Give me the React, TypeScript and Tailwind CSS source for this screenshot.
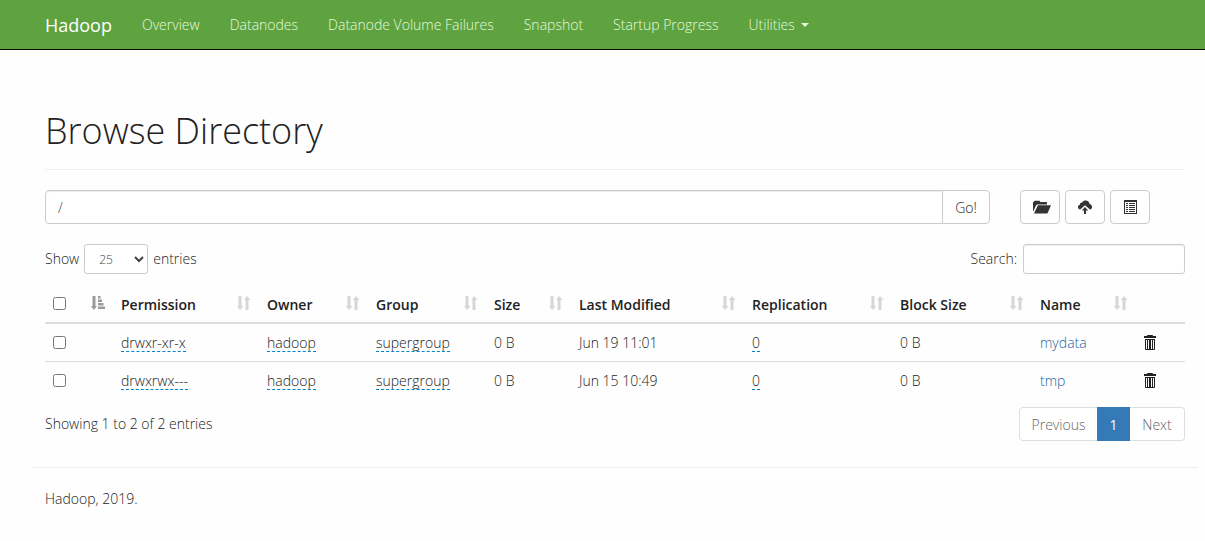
import { useState } from 'react';

interface FileEntry {
  permission: string;
  owner: string;
  group: string;
  size: string;
  modified: string;
  replication: string;
  blockSize: string;
  name: string;
}

const NAV_LINKS = ['Overview', 'Datanodes', 'Datanode Volume Failures', 'Snapshot', 'Startup Progress'];

const COLUMNS = [
  { label: 'Permission', width: 'w-[146px]' },
  { label: 'Owner', width: 'w-[109px]' },
  { label: 'Group', width: 'w-[118px]' },
  { label: 'Size', width: 'w-[85px]' },
  { label: 'Last Modified', width: 'w-[173px]' },
  { label: 'Replication', width: 'w-[148px]' },
  { label: 'Block Size', width: 'w-[140px]' },
  { label: 'Name', width: 'w-[104px]' },
];

const FILES: FileEntry[] = [
  { permission: 'drwxr-xr-x', owner: 'hadoop', group: 'supergroup', size: '0 B', modified: 'Jun 19 11:01', replication: '0', blockSize: '0 B', name: 'mydata' },
  { permission: 'drwxrwx---', owner: 'hadoop', group: 'supergroup', size: '0 B', modified: 'Jun 15 10:49', replication: '0', blockSize: '0 B', name: 'tmp' },
];

function FolderOpenIcon() {
  return (
    <svg className="w-[18px] h-[14px] ml-[3px]" viewBox="0 0 18 14" fill="currentColor" aria-hidden="true">
      <path d="M0 11V2h.8L1.5.8h5L7.3 2H13c.6 0 1 .4 1 1v1.500H4.700c-.8 0-1.400.4-1.700 1.100L.5 11z" />
      <path d="M4.900 5.300H18L14.800 12.800c-.2.500-.5.800-1 .8H1z" />
    </svg>
  );
}

function CloudUploadIcon() {
  return (
    <svg className="w-[14px] h-[14px]" viewBox="0 0 14 14" fill="currentColor" aria-hidden="true">
      <path d="M2.2 9.500C.9 9.200 0 8.500 0 7.200c0-1.200.8-2.100 1.900-2.400C1.900 3.300 3 2.400 4.200 2.600 4.900 1.100 6.100.6 7.600.6c2.200 0 3.800 1.300 3.900 3.400C13 4.300 14 5.400 14 6.900c0 1.300-.8 2.300-2 2.600L7 5.300z" />
      <path d="M7 7l3.200 3.400H8V14H6v-3.600H3.800z" />
    </svg>
  );
}

function ListIcon() {
  return (
    <svg className="w-[14px] h-[14px]" viewBox="0 0 14 14" fill="currentColor" aria-hidden="true">
      <path fillRule="evenodd" d="M1 0h13v14H1zM2 2v11h11V2z" />
      <path d="M3 3h2v1H3zM6 3h6v1H6zM3 5h2v1H3zM6 5h6v1H6zM3 7h2v1H3zM6 7h6v1H6zM3 9h2v1H3zM6 9h6v1H6zM3 11h2v1H3zM6 11h6v1H6z" />
    </svg>
  );
}

function TrashIcon() {
  return (
    <svg className="w-[14px] h-[16px]" viewBox="0 0 14 16" fill="currentColor" aria-hidden="true">
      <path fillRule="evenodd" d="M3 1c0-.6.4-1 1-1h4c.6 0 1 .4 1 1h3v2H0V1zM4 1h4z" />
      <path fillRule="evenodd" d="M1 4h10v10c0 .6-.4 1-1 1H2c-.6 0-1-.4-1-1zM2 5v9h1V5zM4 5v9h1V5zM7 5v9h1V5zM9 5v9h1V5z" />
    </svg>
  );
}

function SortIcon() {
  return (
    <svg className="w-[14px] h-[15px] text-[#d6d6d6]" viewBox="0 0 14 15" fill="currentColor" aria-hidden="true">
      <path d="M1.500 1h3v10h2L3 15l-3-4h1.500z" />
      <path d="M8.500 15h3V5h2L10 1 7 5h1.500z" />
    </svg>
  );
}

function SortAscIcon() {
  return (
    <svg className="w-[14px] h-[15px] text-[#999]" viewBox="0 0 14 15" fill="currentColor" aria-hidden="true">
      <path d="M1.500 1h3v10h1.500L3 15l-3-4h1.500z" />
      <path d="M7 1h2.500v2.500H7zM7 4.500h4V7H7zM7 8h5.500v2.500H7zM7 11.500h7V14H7z" />
    </svg>
  );
}

function Editable({ text }: { text: string }) {
  return (
    <a href="#" className="inline-block h-[18px] leading-[17px] border-b border-dashed border-b-sky-600">{text}</a>
  );
}

export default function App() {
  const [path, setPath] = useState('/');
  const [search, setSearch] = useState('');
  const [pageSize, setPageSize] = useState('25');
  const [selected, setSelected] = useState<string[]>([]);

  const rows = FILES.filter(f => f.name.includes(search));
  const allSelected = selected.length === FILES.length;

  const toggle = (name: string) =>
    setSelected(s => (s.includes(name) ? s.filter(n => n !== name) : [...s, name]));

  return (
    <div className="min-h-screen bg-[#fefefe] text-[#222] text-sm leading-5 font-light font-['Open_Sans',sans-serif]">
      <nav className="flex items-center h-[50px] pt-px pl-[45px] bg-[#5fa341] border-b border-[#080808] text-[#e6fadb]">
        <a href="#" className="text-lg font-normal text-white mr-[15px]">Hadoop</a>
        {NAV_LINKS.map(label => (
          <a key={label} href="#" className="px-[15px] whitespace-nowrap">{label}</a>
        ))}
        <button type="button" className="flex items-center gap-[6px] px-[15px]">
          Utilities
          <svg className="w-2 h-1" viewBox="0 0 8 4" fill="currentColor" aria-hidden="true"><path d="M0 0h8L4 4z" /></svg>
        </button>
      </nav>

      <main className="pl-[45px] pr-5">
        <header className="pt-[61px] pb-[18px] border-b border-[#eee]">
          <h1 className="text-4xl leading-10 font-light">Browse Directory</h1>
        </header>

        <form className="flex mt-5" onSubmit={e => e.preventDefault()}>
          <input
            aria-label="Directory"
            value={path}
            onChange={e => setPath(e.target.value)}
            className="flex-1 min-w-0 h-[34px] px-3 pt-px border border-[#ccc] rounded-l text-[#444] bg-white shadow-[inset_0_1px_1px_rgba(0,0,0,0.075)]"
          />
          <button type="submit" className="w-12 h-[34px] pt-px -ml-px border border-[#ccc] rounded-r bg-white">Go!</button>
          <div className="flex gap-[5px] ml-[30px] mr-[35px] text-[#333]">
            <button type="button" title="Create Directory" className="flex items-center justify-center w-10 h-[34px] border border-[#ccc] rounded bg-white"><FolderOpenIcon /></button>
            <button type="button" title="Upload Files" className="flex items-center justify-center w-10 h-[34px] border border-[#ccc] rounded bg-white"><CloudUploadIcon /></button>
            <button type="button" title="Cut & Paste" className="flex items-center justify-center w-10 h-[34px] border border-[#ccc] rounded bg-white"><ListIcon /></button>
          </div>
        </form>

        <div className="flex items-center justify-between mt-5">
          <label className="flex items-center gap-[5px]">
            Show
            <select
              value={pageSize}
              onChange={e => setPageSize(e.target.value)}
              className="w-16 h-[30px] px-[10px] border border-[#ccc] rounded-[3px] text-xs text-[#444] bg-white"
            >
              <option>10</option>
              <option>25</option>
              <option>50</option>
              <option>100</option>
            </select>
            entries
          </label>
          <label className="flex items-center gap-[6px]">
            Search:
            <input
              value={search}
              onChange={e => setSearch(e.target.value)}
              className="w-[162px] h-[30px] px-[10px] border border-[#ccc] rounded-[3px] text-xs bg-white shadow-[inset_0_1px_1px_rgba(0,0,0,0.075)]"
            />
          </label>
        </div>

        <table className="w-full table-fixed mt-3 border-separate border-spacing-0 text-left">
          <thead>
            <tr className="h-[38px]">
              <th className="w-[68px] px-2 pt-[2px] border-b-2 border-[#ddd]">
                <div className="flex items-start justify-between h-5">
                  <input
                    type="checkbox"
                    aria-label="Select all"
                    checked={allSelected}
                    onChange={() => setSelected(allSelected ? [] : FILES.map(f => f.name))}
                    className="block w-[13px] h-[13px] mt-[2px]"
                  />
                  <SortAscIcon />
                </div>
              </th>
              {COLUMNS.map(c => (
                <th key={c.label} className={`${c.width} px-2 pt-[2px] border-b-2 border-[#ddd] font-semibold whitespace-nowrap`}>
                  <div className="flex items-start justify-between">{c.label}<SortIcon /></div>
                </th>
              ))}
              <th className="w-[49px] border-b-2 border-[#ddd]" />
            </tr>
          </thead>
          <tbody className="[&>tr+tr>td]:border-t [&>tr+tr>td]:border-[#ddd] [&>tr+tr]:h-[38px]">
            {rows.map(f => (
              <tr key={f.name} className="h-[37px]">
                <td className="px-2">
                  <input
                    type="checkbox"
                    aria-label={`Select ${f.name}`}
                    checked={selected.includes(f.name)}
                    onChange={() => toggle(f.name)}
                    className="block w-[13px] h-[13px]"
                  />
                </td>
                <td className="px-2"><Editable text={f.permission} /></td>
                <td className="px-2"><Editable text={f.owner} /></td>
                <td className="px-2"><Editable text={f.group} /></td>
                <td className="px-2">{f.size}</td>
                <td className="px-2">{f.modified}</td>
                <td className="px-2"><Editable text={f.replication} /></td>
                <td className="px-2">{f.blockSize}</td>
                <td className="px-2"><a href="#" className="text-[#23649f]">{f.name}</a></td>
                <td className="px-2">
                  <button type="button" aria-label={`Delete ${f.name}`} className="block"><TrashIcon /></button>
                </td>
              </tr>
            ))}
          </tbody>
        </table>

        <div className="flex items-center justify-between mt-2">
          <p>Showing 1 to 2 of 2 entries</p>
          <div className="flex h-[34px]">
            <button type="button" className="w-[79px] pt-px border border-[#ddd] rounded-l text-[#666] bg-white">Previous</button>
            <button type="button" className="w-[33px] pt-px -ml-px bg-[#337ab7] font-normal text-white">1</button>
            <button type="button" className="w-[55px] pt-px border border-l-0 border-[#ddd] rounded-r text-[#666] bg-white">Next</button>
          </div>
        </div>
      </main>

      <footer className="mt-[26px] ml-8 mr-[7px] pt-[21px] pl-[13px] pb-8 border-t border-[#eee]">
        <p>Hadoop, 2019.</p>
      </footer>
    </div>
  );
}
